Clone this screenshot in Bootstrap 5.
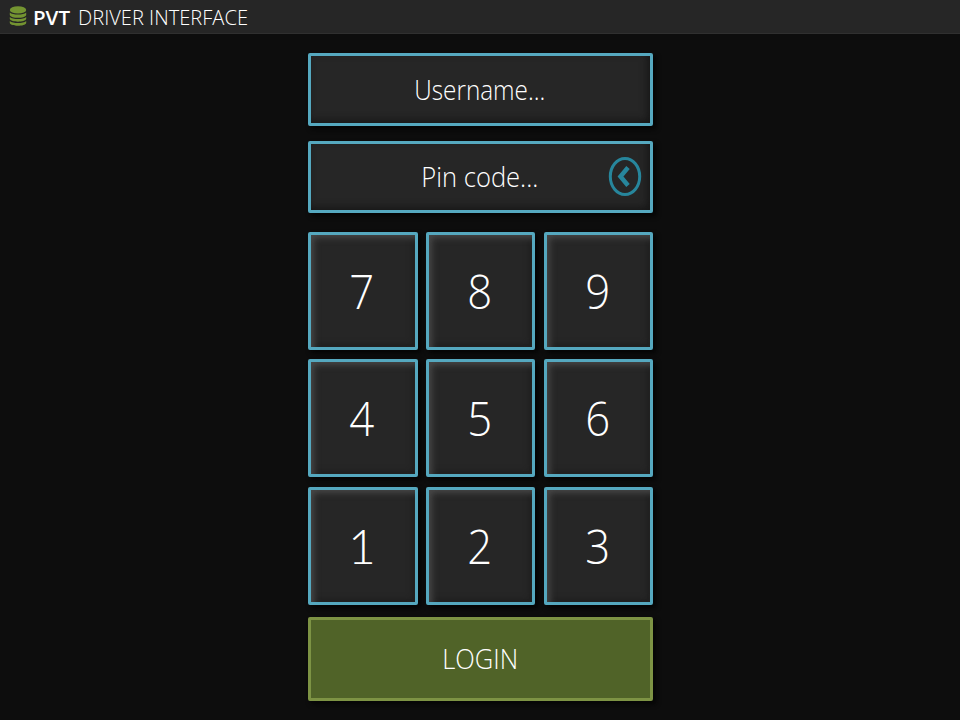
<!DOCTYPE html>
<html lang="en">
<head>
<meta charset="utf-8">
<meta name="viewport" content="width=device-width, initial-scale=1">
<title>PVT Driver Interface</title>
<link href="https://cdn.jsdelivr.net/npm/bootstrap@5.3.0/dist/css/bootstrap.min.css" rel="stylesheet">
<style>
body{background:#0d0d0d;color:#fff;font-family:"Open Sans","Noto Sans",sans-serif;font-weight:300;height:720px}
.topbar{height:34px;background:#262626;border-bottom:1px solid #303030;padding-left:9px}
.topbar svg{width:18px;height:20px;margin-top:-1px}
.topbar .brand,.topbar .title{font-size:20px;line-height:32px;padding-top:2px;white-space:nowrap;display:inline-block;transform-origin:0 50%}
.brand{font-weight:600;width:37px;margin-left:6px}
.title{margin-left:8px;width:171px}
.login-panel{width:345px;margin-top:19px}
.field,.key{background:#262626;border:3px solid #55a8bf;border-radius:2px;color:#fff}
.field{height:73px;font-size:27px;box-shadow:inset -3px -3px 7px #171717,3px 3px 5px #040404}
.field.pin{height:72px;margin-top:15px}
.txt{display:inline-block;white-space:nowrap;line-height:1;padding-bottom:1px}
.clear{right:8px;top:12px;width:34px;height:42px}
.keys{grid-template-columns:110px 109px 110px;grid-template-rows:118px 118px 119px;gap:9px 8px;margin-top:19px}
.key{font-size:48px;font-weight:300;line-height:1;padding:0;height:118px;box-shadow:inset 4px 4px 6px -1px #484848,inset -2px -2px 6px #1e1e1e,3px 3px 5px #040404}
.key:nth-child(3n){margin-left:1px}
.key:nth-child(n+7){margin-top:1px}
.key span{display:inline-block;transform:scaleX(.91)}
.key:nth-child(3n+1) span{padding-right:1px}
.key .one{font-family:"Lato","Open Sans",sans-serif;transform:none}
.btn-login{height:84px;margin-top:12px;background:#506328;border:3px solid #7d9344;border-radius:2px;color:#fff;font-size:27px;font-weight:300;box-shadow:3px 3px 5px #050505}
</style>
</head>
<body class="overflow-hidden">
<header class="topbar d-flex align-items-center">
  <svg viewBox="0 0 18 20" fill="#749431" aria-hidden="true"><ellipse cx="9" cy="3.900" rx="8.200" ry="3.700"/><path d="M.8 6.500C3.500 9.200 14.500 9.200 17.200 6.500V8.900C16 12.700 2 12.700 .8 8.900Z"/><path d="M.8 11C3.500 13.700 14.500 13.700 17.200 11V13C16 16.500 2 16.500 .8 13Z"/><path d="M.8 15C3.500 17.700 14.500 17.700 17.200 15V17C16 20.700 2 20.700 .8 17Z"/></svg>
  <span class="brand" data-w="37">PVT</span>
  <span class="title" data-w="170">DRIVER INTERFACE</span>
</header>
<main class="login-panel mx-auto">
  <div class="field d-flex align-items-center justify-content-center"><span class="txt" data-w="131">Username...</span></div>
  <div class="field pin position-relative d-flex align-items-center justify-content-center"><span class="txt" data-w="117">Pin code...</span>
    <svg class="clear position-absolute" viewBox="0 0 34 42" fill="none" stroke="#27869c" aria-hidden="true"><ellipse cx="17" cy="20.500" rx="14.700" ry="18" stroke-width="3"/><path d="M20 11.500 12.500 20.500 20 29.500" stroke-width="4.500"/></svg>
  </div>
  <div class="keys d-grid">
    <button class="key"><span>7</span></button><button class="key"><span>8</span></button><button class="key"><span>9</span></button>
    <button class="key"><span>4</span></button><button class="key"><span>5</span></button><button class="key"><span>6</span></button>
    <button class="key"><span class="one">1</span></button><button class="key"><span>2</span></button><button class="key"><span>3</span></button>
  </div>
  <button class="btn-login w-100 d-flex align-items-center justify-content-center p-0"><span class="txt" data-w="76">LOGIN</span></button>
</main>
<script src="https://cdn.jsdelivr.net/npm/bootstrap@5.3.0/dist/js/bootstrap.bundle.min.js"></script>
<script>
// Condense each label to its design width
document.querySelectorAll('[data-w]').forEach(function(el){
  var r=document.createRange();r.selectNodeContents(el);
  el.style.transform='scaleX('+(el.dataset.w/r.getBoundingClientRect().width)+')';
});
</script>
</body>
</html>
